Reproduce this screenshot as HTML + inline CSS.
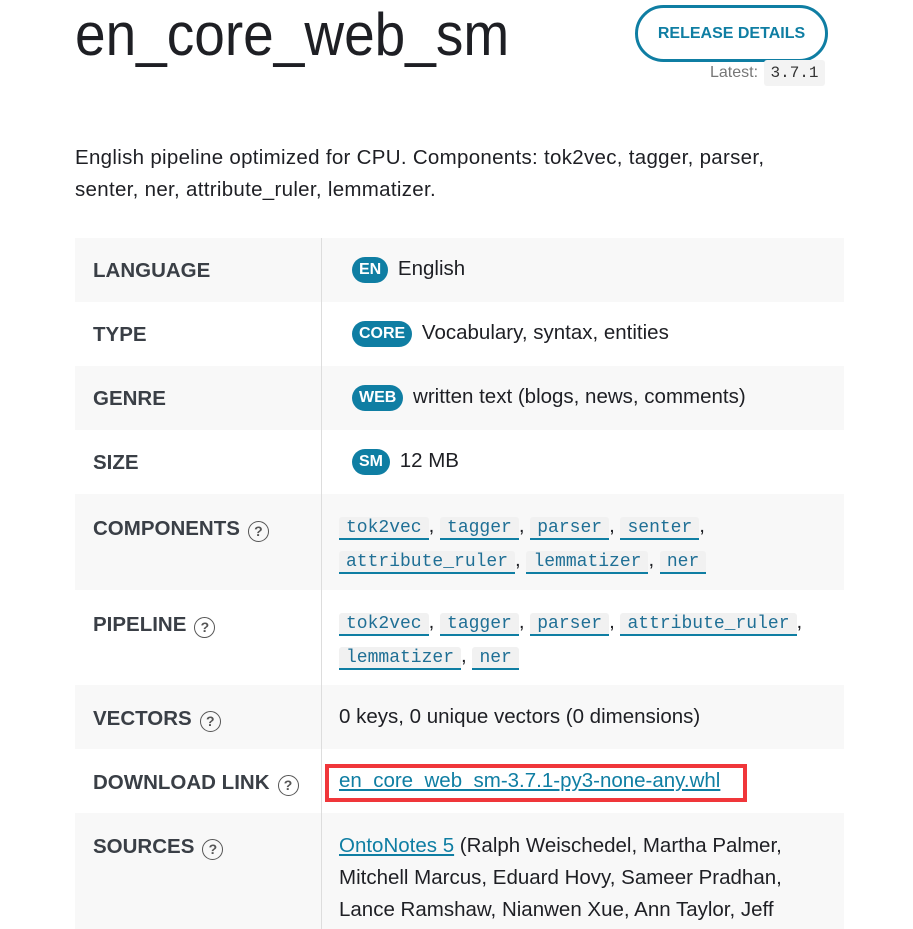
<!DOCTYPE html>
<html><head><style>
*{margin:0;padding:0;box-sizing:border-box}
body{width:913px;height:929px;overflow:hidden;background:#fff;font-family:"Liberation Sans",sans-serif;color:#1e1f24;position:relative}
h1{position:absolute;left:75px;top:-1px;font-size:55px;font-weight:normal;color:#1e1f24;transform:scaleY(1.1);transform-origin:left top}
.btn{position:absolute;left:635px;top:5px;width:193px;height:57px;border:3px solid #0f7ea3;border-radius:29px;color:#0f7ea3;font-weight:bold;font-size:16px;text-align:center;line-height:51px}
.latest{position:absolute;left:710px;top:64px;font-size:16px;color:#777}
.latest code{font-family:"Liberation Mono",monospace;background:#f3f3f3;color:#333;padding:4px 6px;border-radius:3px;font-size:16px;margin-left:2px}
.desc{position:absolute;left:75px;top:142px;width:820px;font-size:20.5px;line-height:32px;letter-spacing:0.3px}
.row{position:absolute;left:75px;width:769px}
.row.g{background:#f8f8f8}
.lab{position:absolute;left:18px;font-weight:bold;font-size:20.5px;color:#3a3f46}
.val{position:absolute;left:277px;font-size:20.5px;right:0}
.vline{position:absolute;left:321px;top:238px;width:1px;height:691px;background:#ddd}
.b{display:inline-block;background:#0f7ea3;color:#fff;font-weight:bold;font-size:16px;border-radius:13px;padding:0 7px;height:26px;line-height:26px;margin-right:4px;vertical-align:1px}
.q{display:inline-block;width:21px;height:21px;border:1.5px solid #555;border-radius:50%;font-size:14px;text-align:center;line-height:18px;color:#555;margin-left:8px;vertical-align:-1px;font-weight:bold}
.c{font-family:"Liberation Mono",monospace;font-size:18px;color:#1f6f95;background:#f1f1f1;border-bottom:2px solid #0f7ea3;padding:1px 7px 0;border-radius:3px 3px 0 0}
.cl{line-height:32px}
a{color:#0f7ea3;text-decoration:underline}
</style></head><body>
<h1>en_core_web_sm</h1>
<div class="btn">RELEASE DETAILS</div>
<div class="latest">Latest: <code>3.7.1</code></div>
<div class="desc">English pipeline optimized for CPU. Components: tok2vec, tagger, parser,<br>senter, ner, attribute_ruler, lemmatizer.</div>

<div class="row g" style="top:238px;height:64px"><div class="lab" style="top:21px">LANGUAGE</div><div class="val" style="top:19px"><span class="b">EN</span> English</div></div>
<div class="row" style="top:302px;height:64px"><div class="lab" style="top:21px">TYPE</div><div class="val" style="top:19px"><span class="b">CORE</span> Vocabulary, syntax, entities</div></div>
<div class="row g" style="top:366px;height:64px"><div class="lab" style="top:21px">GENRE</div><div class="val" style="top:19px"><span class="b">WEB</span> written text (blogs, news, comments)</div></div>
<div class="row" style="top:430px;height:64px"><div class="lab" style="top:21px">SIZE</div><div class="val" style="top:19px"><span class="b">SM</span> 12 MB</div></div>
<div class="row g" style="top:494px;height:96px"><div class="lab" style="top:23px">COMPONENTS<span class="q">?</span></div><div class="val cl" style="top:16px;left:264px"><span class="c">tok2vec</span>, <span class="c">tagger</span>, <span class="c">parser</span>, <span class="c">senter</span>,<br><span class="c">attribute_ruler</span>, <span class="c">lemmatizer</span>, <span class="c">ner</span></div></div>
<div class="row" style="top:590px;height:95px"><div class="lab" style="top:23px">PIPELINE<span class="q">?</span></div><div class="val cl" style="top:16px;left:264px"><span class="c">tok2vec</span>, <span class="c">tagger</span>, <span class="c">parser</span>, <span class="c">attribute_ruler</span>,<br><span class="c">lemmatizer</span>, <span class="c">ner</span></div></div>
<div class="row g" style="top:685px;height:64px"><div class="lab" style="top:22px">VECTORS<span class="q">?</span></div><div class="val" style="top:20px;left:264px">0 keys, 0 unique vectors (0 dimensions)</div></div>
<div class="row" style="top:749px;height:64px"><div class="lab" style="top:22px">DOWNLOAD LINK<span class="q">?</span></div>
<div style="position:absolute;left:250px;top:15px;width:422px;height:38px;border:4px solid #f0363a"></div>
<div class="val" style="top:20px;left:264px"><a>en_core_web_sm-3.7.1-py3-none-any.whl</a></div></div>
<div class="row g" style="top:813px;height:116px"><div class="lab" style="top:22px">SOURCES<span class="q">?</span></div><div class="val" style="top:17px;left:264px;line-height:32px"><a>OntoNotes 5</a> (Ralph Weischedel, Martha Palmer,<br>Mitchell Marcus, Eduard Hovy, Sameer Pradhan,<br>Lance Ramshaw, Nianwen Xue, Ann Taylor, Jeff</div></div>
<div class="vline"></div>
</body></html>
